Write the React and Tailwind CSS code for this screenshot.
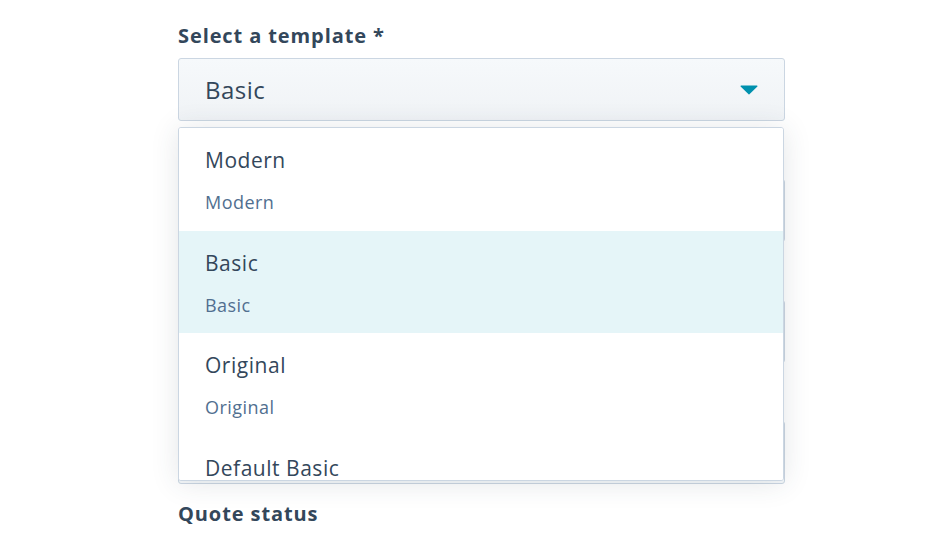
const FONT = { fontFamily: '"Open Sans", "Liberation Sans", sans-serif' };

// last option is cut off by the menu's bottom edge, so its sub line never shows
const options = [
  { label: 'Modern', sub: 'Modern' },
  { label: 'Basic', sub: 'Basic', active: true },
  { label: 'Original', sub: 'Original' },
  { label: 'Default Basic' },
];

// fields hidden under the open menu: only their right edges show
const Field = () => (
  <div className="mt-[22px]">
    <div className="h-[28px]" />
    <div className="mt-2 h-[63px] rounded-[3px] border border-[#cbd6e2] bg-[#f5f8fa]" />
  </div>
);

export default function App() {
  return (
    <div className="w-[949px] h-[534px] bg-white overflow-hidden" style={FONT}>
      <div className="relative ml-[178px] w-[607px] pt-[22px]">
        {/* Select a template */}
        <div className="text-[20px] leading-[28px] font-bold tracking-[0.045em] text-[#33475b]">Select a template *</div>
        <div className="mt-2 h-[63px] rounded-[3px] border border-[#cbd6e2] bg-gradient-to-b from-[#f6f9fb] to-[#f0f3f6] flex items-center justify-between pl-[26px] pr-[26px]">
          <span className="text-[24px] tracking-[0.02em] text-[#33475b]">Basic</span>
          <svg width="18" height="10" viewBox="0 0 18 10">
            <path d="M1 0.5h16a0.6 0.6 0 0 1 0.4 1L9.4 9.3a0.6 0.6 0 0 1-0.8 0L0.6 1.5A0.6 0.6 0 0 1 1 0.5z" fill="#0091ae" />
          </svg>
        </div>

        <Field />
        <Field />
        <Field />
        <div className="mt-[17px] text-[20px] leading-[26px] font-bold tracking-[0.045em] text-[#33475b]">Quote status</div>

        {/* Open dropdown menu */}
        <div className="absolute left-0 top-[127px] w-[606px] h-[354px] overflow-hidden rounded-[3px] border border-[#cbd6e2] bg-white shadow-[0_2px_28px_rgba(45,62,80,0.13)]">
          {options.map((o) => (
            <div
              key={o.label}
              className={`h-[102.5px] pl-[26px] pt-[17px] ${o.active ? 'bg-[#e5f5f8]' : 'bg-white'}`}
            >
              <div className="text-[21px] leading-[30px] tracking-[0.025em] text-[#33475b]">{o.label}</div>
              {o.sub && (
                <div className="mt-[14px] text-[18px] leading-[26px] tracking-[0.025em] text-[#516f90]">{o.sub}</div>
              )}
            </div>
          ))}
        </div>
      </div>
    </div>
  );
}
